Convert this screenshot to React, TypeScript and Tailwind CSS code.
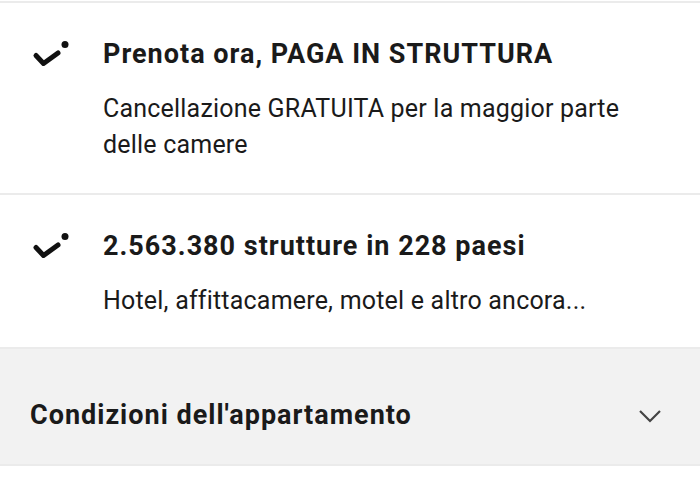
import React from 'react';

function CheckDot() {
  return (
    <svg width="40" height="34" viewBox="0 0 40 34" className="shrink-0">
      <path d="M6 18.5 L13.5 26.5 L28 16" fill="none" stroke="#111" strokeWidth="5" strokeLinecap="round" strokeLinejoin="round" />
      <circle cx="35" cy="7.5" r="3.5" fill="#111" />
    </svg>
  );
}

function Feature({ title, lines, pb }: { title: string; lines: string[]; pb: string }) {
  return (
    <div className={`flex border-b-2 border-[#ebebeb] pl-[30px] pr-4 pt-[34px] ${pb}`}>
      <div className="w-[73px]">
        <CheckDot />
      </div>
      <div>
        <div className="text-[27px] leading-[34px] font-bold tracking-[1px] text-[#1a1a1a]">{title}</div>
        <div className="mt-[20px] text-[25px] leading-[36px] tracking-[0.2px] text-[#1a1a1a]">
          {lines.map((l) => (
            <div key={l}>{l}</div>
          ))}
        </div>
      </div>
    </div>
  );
}

export default function App() {
  return (
    <div className="w-[700px] h-[500px] bg-white overflow-hidden" style={{ fontFamily: 'Roboto, sans-serif' }}>
      <div className="border-t-2 border-[#ebebeb] mt-[1px]" />
      <Feature
        title="Prenota ora, PAGA IN STRUTTURA"
        lines={['Cancellazione GRATUITA per la maggior parte', 'delle camere']}
        pb="pb-[30px]"
      />
      <Feature title="2.563.380 strutture in 228 paesi" lines={['Hotel, affittacamere, motel e altro ancora...']} pb="pb-[28px]" />
      <div className="flex items-start justify-between bg-[#f2f2f2] border-b-2 border-[#ebebeb] h-[117px] pl-[30px] pr-[38px] pt-[49px]">
        <span className="text-[27px] leading-[34px] font-bold tracking-[1px] text-[#1a1a1a]">Condizioni dell'appartamento</span>
        <svg width="24" height="14" viewBox="0 0 24 14" className="mt-[11px]">
          <path d="M2 2 L12 12 L22 2" fill="none" stroke="#444" strokeWidth="2.2" />
        </svg>
      </div>
    </div>
  );
}
